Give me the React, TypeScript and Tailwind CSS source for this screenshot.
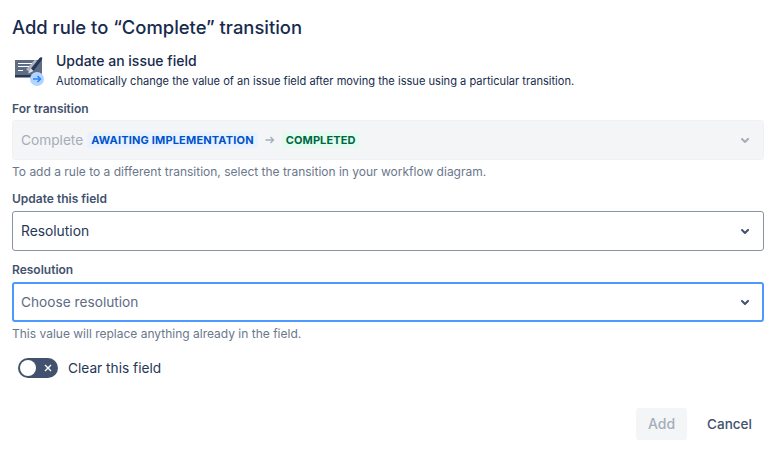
import React from 'react';

const Chevron = ({ className }: { className: string }) => (
  <svg width="24" height="24" viewBox="0 0 24 24" className={className}>
    <path
      d="M8.3 10.3a1 1 0 0 1 1.4 0l2.3 2.3 2.3-2.3a1 1 0 1 1 1.4 1.4l-3 3a1 1 0 0 1-1.4 0l-3-3a1 1 0 0 1 0-1.4z"
      fill="currentColor"
    />
  </svg>
);

const FieldIcon = () => (
  <svg width="32" height="36" viewBox="0 0 32 36" className="shrink-0">
    <rect x="1" y="9" width="27" height="17" fill="#5e6c84" />
    <rect x="1" y="24" width="27" height="2.5" fill="#253858" />
    <path d="M4 12.5h14M4 15.5h11M4 19.5h5" stroke="#fff" strokeWidth="1" fill="none" />
    <path d="M14 20l9-10" stroke="#fff" strokeWidth="5" opacity="0.5" fill="none" />
    <path d="M17 17.5l8.5-10.5c.8-.9 1.8-1 2.4-.4s.6 1.6-.2 2.4L19.5 20z" fill="#253858" />
    <path d="M14 22.5l2.8-5 2.7 2.6z" fill="#dfe1e6" />
    <circle cx="23" cy="28" r="7" fill="#b3d4ff" />
    <path d="M19 28h7.5M23.5 25l3 3-3 3" stroke="#2684ff" strokeWidth="1.6" fill="none" />
  </svg>
);

const Label = ({ children }: { children: React.ReactNode }) => (
  <div className="text-xs leading-4 font-semibold text-[#42526e]">{children}</div>
);

export default function App() {
  return (
    <div className="w-[771px] h-[457px] bg-white overflow-hidden pl-3 pr-[7px] pt-[15px] font-['Inter','Liberation_Sans',sans-serif] text-[#172b4d]">
      <h1 className="text-[18.4px] leading-6 font-medium text-[#172b4d]">Add rule to “Complete” transition</h1>

      <div className="flex mt-3 h-[34px]">
        <div className="w-11 pl-[2px]">
          <FieldIcon />
        </div>
        <div>
          <div className="text-sm leading-[20px] font-medium">Update an issue field</div>
          <div className="text-[11.1px] leading-4 mt-[2px]">
            Automatically change the value of an issue field after moving the issue using a particular transition.
          </div>
        </div>
      </div>

      <div className="mt-4">
        <Label>For transition</Label>
        <div className="mt-[3px] h-10 flex items-center justify-between pl-2 pr-[6px] rounded-[3px] bg-[#f4f5f7] border border-[#f0f1f4]">
          <div className="flex items-center">
            <span className="text-[13.7px] text-[#a5adba]">Complete</span>
            <span className="ml-1 px-[4px] h-4 flex items-center rounded-[3px] bg-[#e9f2ff] text-[11px] font-bold text-[#0052cc] tracking-[0.17px]">
              AWAITING IMPLEMENTATION
            </span>
            <svg width="12" height="12" viewBox="0 0 12 12" className="mx-[6px]">
              <path d="M1.5 6h8M6.5 3l3 3-3 3" stroke="#a5adba" strokeWidth="1.3" fill="none" />
            </svg>
            <span className="px-[4px] h-4 flex items-center rounded-[3px] bg-[#e3fcef] text-[11px] font-bold text-[#006644] tracking-[0.1px]">
              COMPLETED
            </span>
          </div>
          <Chevron className="text-[#a5adba]" />
        </div>
        <div className="mt-1 text-xs leading-4 text-[#6b778c]">
          To add a rule to a different transition, select the transition in your workflow diagram.
        </div>
      </div>

      <div className="mt-[11px]">
        <Label>Update this field</Label>
        <div className="mt-1 h-10 flex items-center justify-between pl-2 pr-[6px] rounded-[3px] bg-white border border-[#8993a4]">
          <span className="text-[13.8px] text-[#253858]">Resolution</span>
          <Chevron className="text-[#42526e]" />
        </div>
      </div>

      <div className="mt-[11px]">
        <Label>Resolution</Label>
        <div className="mt-1 h-10 flex items-center justify-between pl-2 pr-[6px] rounded-[3px] bg-white border-2 border-[#4c9aff]">
          <span className="text-[13.7px] text-[#5e6c84] -ml-[1px]">Choose resolution</span>
          <Chevron className="text-[#42526e] -mr-[1px]" />
        </div>
        <div className="mt-[4px] text-xs leading-4 text-[#6b778c]">This value will replace anything already in the field.</div>
      </div>

      <div className="flex items-center mt-[16px] ml-[6px] h-5">
        <div className="w-10 h-5 rounded-full bg-[#42526e] flex items-center justify-between pl-[2px] pr-[5px]">
          <div className="w-4 h-4 rounded-full bg-white" />
          <svg width="10" height="10" viewBox="0 0 10 10">
            <path d="M2 2l6 6M8 2l-6 6" stroke="#fff" strokeWidth="1.4" />
          </svg>
        </div>
        <span className="ml-[10px] text-[13.7px] text-[#253858]">Clear this field</span>
      </div>

      <div className="flex justify-end items-center mt-[30px]">
        <button className="w-[51px] h-8 rounded-[3px] bg-[#f4f5f7] text-sm font-medium text-[#a5adba]">Add</button>
        <button className="ml-2 w-[69px] h-8 text-[13.5px] font-medium text-[#42526e]">Cancel</button>
      </div>
    </div>
  );
}
